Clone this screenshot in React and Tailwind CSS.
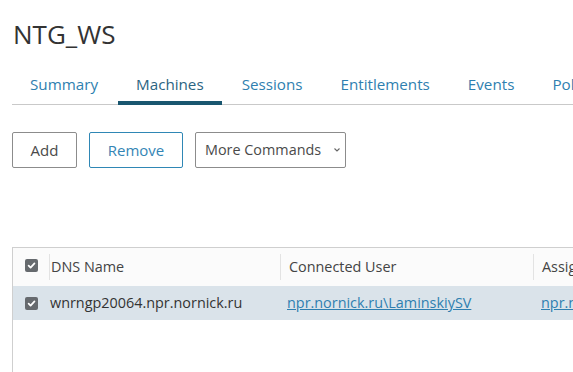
import React from "react";

function Check() {
  return (
    <span className="flex h-[13px] w-[13px] items-center justify-center rounded-[2px] bg-[#666a6e]">
      <svg width="9" height="9" viewBox="0 0 10 10">
        <path d="M1.8 5.2 L4 7.4 L8.3 2.6" fill="none" stroke="#fff" strokeWidth="1.9" strokeLinecap="round" strokeLinejoin="round" />
      </svg>
    </span>
  );
}

export default function App() {
  const tabs = ["Summary", "Machines", "Sessions", "Entitlements", "Events", "Policies"];
  return (
    <div className="h-[372px] w-[573px] overflow-hidden bg-white" style={{ fontFamily: '"Open Sans", sans-serif' }}>
      <div className="pl-[12px]">
        <h1 className="pt-[16px] pl-[1px] text-[26px] leading-[36px] text-[#333]">NTG_WS</h1>
        <div className="mt-[21px] flex h-[32px] gap-[2px] whitespace-nowrap border-b border-[#c9c9c9]">
          {tabs.map((t, i) => (
            <div
              key={t}
              className={
                "relative px-[18px] text-[15.2px] leading-[22px] " +
                (i === 1 ? "text-[#2b6482]" : "text-[#2f7fb0]")
              }
            >
              {t}
              {i === 1 && <div className="absolute bottom-[-1px] left-0 right-0 h-[4px] bg-[#19566f]" />}
            </div>
          ))}
        </div>
        <div className="mt-[27px] flex gap-[12px] whitespace-nowrap">
          <button className="h-[36px] w-[65px] rounded-[2px] border border-[#8c8c8c] text-[15px] text-[#4a4a4a]">Add</button>
          <button className="h-[36px] w-[94px] rounded-[2px] border border-[#2f87b5] text-[15px] text-[#3385b5]">Remove</button>
          <button className="flex h-[36px] w-[151px] items-center rounded-[2px] border border-[#8c8c8c] pl-[9px] text-[14.4px] text-[#4a4a4a]">
            <span>More Commands</span>
            <svg className="ml-[12px]" width="8" height="6" viewBox="0 0 8 6">
              <path d="M1.5 1.5 L4 4 L6.5 1.5" fill="none" stroke="#666" strokeWidth="1.1" />
            </svg>
          </button>
        </div>
        <div className="mt-[79px] h-[200px] border-l border-t border-[#cfcfcf] text-[14.4px]">
          <div className="flex h-[38px] items-center whitespace-nowrap bg-[#fbfbfb] text-[#444]">
            <div className="flex w-[36px] shrink-0 justify-center pl-[1px] pb-[4px]">
              <Check />
            </div>
            <div className="flex h-[26px] w-[231px] shrink-0 items-center border-l border-[#e3e3e3] pl-[1px]">DNS Name</div>
            <div className="flex h-[26px] w-[253px] shrink-0 items-center border-l border-[#e3e3e3] pl-[8px]">Connected User</div>
            <div className="flex h-[26px] shrink-0 items-center border-l border-[#e3e3e3] pl-[8px]">Assigned User</div>
          </div>
          <div className="flex h-[34px] items-center whitespace-nowrap bg-[#dae3ea] text-[#333]">
            <div className="flex w-[36px] shrink-0 justify-center pl-[1px]">
              <Check />
            </div>
            <div className="w-[232px] shrink-0 pl-[1px]">wnrngp20064.npr.nornick.ru</div>
            <div className="w-[253px] shrink-0 pl-[6px]">
              <span className="text-[#2f7fb0] underline">npr.nornick.ru\LaminskiySV</span>
            </div>
            <div className="shrink-0 pl-[7px]">
              <span className="text-[#2f7fb0] underline">npr.nornick.ru\LaminskiySV</span>
            </div>
          </div>
        </div>
      </div>
    </div>
  );
}
